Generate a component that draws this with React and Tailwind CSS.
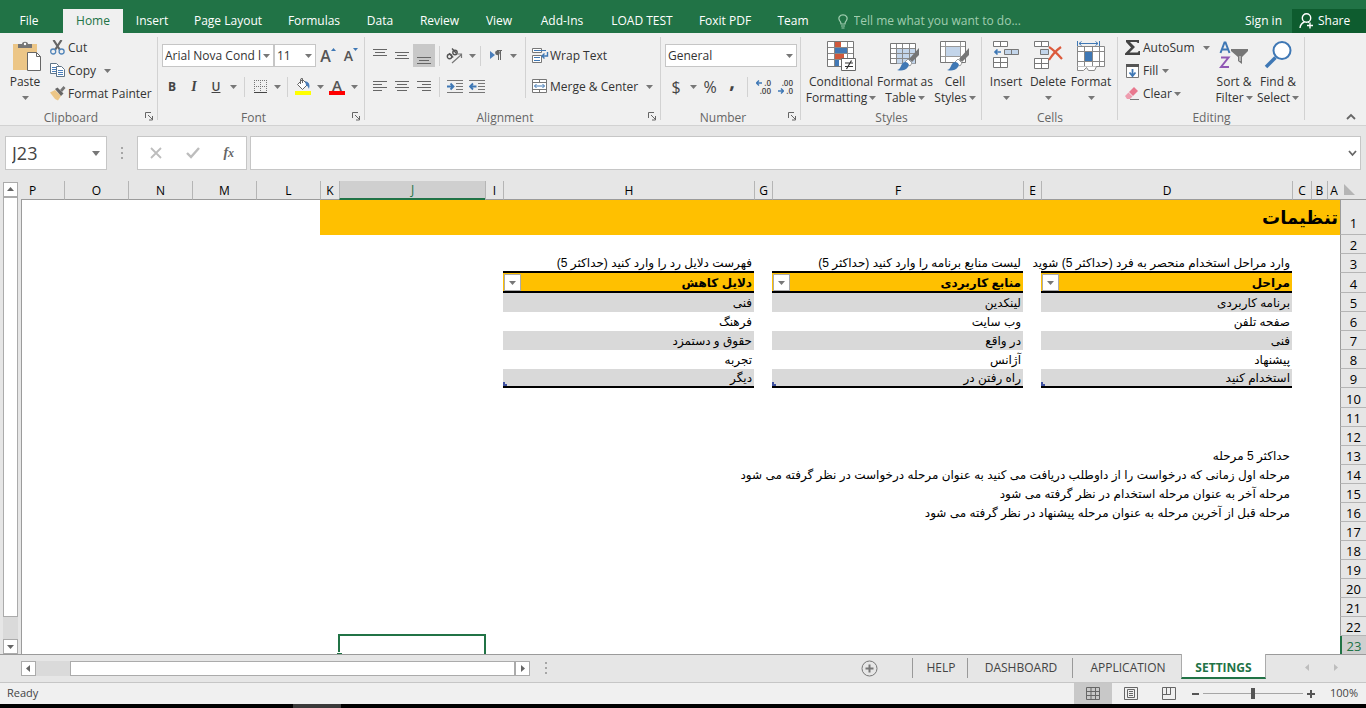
import { useState } from "react";

const Caret = ({ className = "" }) => (
    <svg width="7" height="4" viewBox="0 0 7 4" className={`shrink-0 ${className}`} fill="#777">
        <path d="M0 0h7L3.500 4z" />
    </svg>
);

const Divider = ({ className = "" }) => <span className={`w-px h-5 shrink-0 bg-[#d2d2d2] ${className}`} />;

const Launcher = () => (
    <button aria-label="More options" className="absolute right-1 bottom-1">
        <svg width="9" height="9" fill="none" stroke="#666">
            <path d="M.5 6V.5H6M3 3l4.500 4.500M7.500 4v4H4" />
        </svg>
    </button>
);

const Group = ({ name, width, launcher, children }) => (
    <section aria-label={name} className={`relative shrink-0 flex flex-col ${width}`}>
        <div className="h-[77px]">{children}</div>
        <h2 className="text-center text-xs leading-[15px] text-[#666]">{name}</h2>
        {launcher && <Launcher />}
        <span className="absolute right-0 top-1 h-[83px] w-px bg-[#d2d2d2]" />
    </section>
);

const IconButton = ({ label, width = "w-[22px]", active, children }) => (
    <button
        aria-label={label}
        className={`h-[23px] flex items-center justify-center shrink-0 ${width} ${active ? "bg-[#c8c8c8]" : "hover:bg-[#dadada]"}`}
    >
        {children}
    </button>
);

const BigButton = ({ icon, lines, width, caretBelow }) => (
    <button className={`flex flex-col items-center text-xs leading-4 whitespace-nowrap ${width}`}>
        <span className="h-[33px] flex items-start">{icon}</span>
        <span>{lines[0]}</span>
        <span className="flex items-center gap-0.5 h-4">
            {!caretBelow && lines[1]}
            <Caret />
        </span>
    </button>
);

const SmallButton = ({ icon, text, caret }) => (
    <button className="h-[23px] flex items-center text-xs whitespace-nowrap">
        <span className="w-[18px] flex items-center">{icon}</span>
        {text}
        {caret && <Caret className={caret} />}
    </button>
);

const SelectBox = ({ label, value, width }) => (
    <span className={`relative flex items-center shrink-0 bg-white border border-[#c6c6c6] h-[23px] ${width}`}>
        <select aria-label={label} defaultValue={value} className="appearance-none w-full h-full pl-0.5 pr-2 text-xs bg-transparent outline-none">
            <option>{value}</option>
        </select>
        <Caret className="absolute right-[3px] pointer-events-none" />
    </span>
);

const Lines = ({ rows, height = 16 }) => (
    <svg width="14" height={height} stroke="#666">
        {rows.map(([x1, x2, y]) => (
            <path key={y} d={`M${x1} ${y}.5H${x2}`} />
        ))}
    </svg>
);

const PasteIcon = () => (
    <svg width="34" height="31" viewBox="-4 0 34 31">
        <path d="M1 3h24v26H1z" fill="#ecc687" />
        <path d="M6 7V3h4c0-3 6-3 6 0h4v4z" fill="#757575" />
        <circle cx="13" cy="3" r="1.200" fill="#fff" />
        <path d="M15.500 11.500h9l4 4v14h-13z" fill="#fff" stroke="#666" />
        <path d="M24.500 11.500v4h4" fill="none" stroke="#666" />
    </svg>
);

const CutIcon = () => (
    <svg width="15" height="15" fill="none">
        <path d="M3.500 0l6.500 10M11.500 0L5 10" stroke="#666" strokeWidth="2.200" />
        <circle cx="3.200" cy="11.500" r="2.500" stroke="#5184b8" strokeWidth="1.300" />
        <circle cx="11.600" cy="11.500" r="2.500" stroke="#5184b8" strokeWidth="1.300" />
    </svg>
);

const CopyIcon = () => (
    <svg width="16" height="15" stroke="#5e7488" fill="#fff">
        <path d="M.5 .5h6l2 2v8h-8z" />
        <path d="M2 4.500h4M2 6.500h4M2 8.500h4" stroke="#4a7ebb" />
        <path d="M6.500 3.500h5l3 3v7h-8z" />
        <path d="M8 7.500h5M8 9.500h5M8 11.500h5" stroke="#4a7ebb" />
    </svg>
);

const PainterIcon = () => (
    <svg width="16" height="15">
        <path d="M0 6.500l5-2.500 6 6-3 4.500-3-1.500z" fill="#ecc687" />
        <path d="M5 3l2.500-1.500 6 6L11 10z" fill="#666" />
        <path d="M10 4l3.500-4 2 2L12 6z" fill="#757575" />
    </svg>
);

const FillIcon = () => (
    <svg width="18" height="17">
        <path d="M3.500 6.500l5-5 5 5-5 5z" fill="#fff" stroke="#666" />
        <path d="M6.500 6V2q0-2 2-1.500V5" fill="none" stroke="#666" />
        <path d="M11 3q6 1 4 8-1-3-3-4z" fill="#4a7ebb" />
        <path d="M1 13h16v4H1z" fill="#ff0" />
    </svg>
);

const BordersIcon = () => (
    <svg width="15" height="15" stroke="#777" strokeDasharray="1 1" fill="none">
        <path d="M1 1.500h13M1 7.500h13M1.500 1v12M7.500 1v12M13.500 1v12" />
        <path d="M1 13.500h13" strokeDasharray="none" stroke="#444" />
    </svg>
);

const OrientationIcon = () => (
    <svg width="18" height="16" fill="none" stroke="#555" strokeWidth="1.400">
        <circle cx="3.500" cy="8.500" r="2.200" />
        <path d="M3.200 5.200l4 4.200M6 .5l4.500 5" />
        <circle cx="9" cy="4.500" r="2.200" />
        <path d="M6 15L15.500 6.500M11.500 6h4v4" stroke="#777" strokeWidth="1.200" />
    </svg>
);

const DirectionIcon = () => (
    <svg width="13" height="11">
        <path d="M0 1l5 4-5 4z" fill="#4a7ebb" />
        <path d="M8.500 0v10M10.500 0v10M7 .5h5" stroke="#666" />
        <circle cx="7.500" cy="2.800" r="2.400" fill="#666" />
    </svg>
);

const IndentIcon = ({ flip }) => (
    <svg width="17" height="14" fill="none">
        <path d="M0 .5h16M9 3.500h7M9 6.500h7M9 9.500h7M0 12.500h16" stroke="#777" />
        <path d={flip ? "M7.500 6.500H1M4 3.500L1 6.500l3 3" : "M0 6.500h6.500M3.500 3.500l3 3-3 3"} stroke="#3f78b5" strokeWidth="1.800" />
    </svg>
);

const WrapIcon = () => (
    <svg width="17" height="16" fill="#fff" stroke="#777">
        <path d="M.5 .5h9v4h-9zM.5 7.500h9v7h-9z" />
        <path d="M2 2.500h12M2 9.500h6M2 12.500h6" stroke="#3f78b5" />
        <path d="M15.500 4v4h-5M12.500 5.500l-2.500 2.500 2.500 2.500" stroke="#3f78b5" fill="none" strokeWidth="1.400" />
    </svg>
);

const MergeIcon = () => (
    <svg width="16" height="15" fill="#fff" stroke="#777">
        <path d="M.5 .5h14v13H.5zM.5 3.500h14M.5 10.500h14M7.500 .5v3M7.500 10.500v3" />
        <path d="M2.500 7h10M4.500 5L2.500 7l2 2M10.500 5l2 2-2 2" fill="none" stroke="#3f78b5" />
    </svg>
);

const DecimalArrow = ({ right }) => (
    <svg width="6" height="6" fill="none" stroke="#3f78b5" strokeWidth="1.400">
        <path d={right ? "M0 3h5.500M3 .5L5.500 3 3 5.500" : "M6 3H.7M3 .5L.5 3 3 5.500"} />
    </svg>
);

const DecimalIcon = ({ less }) => (
    <span className="w-4 flex flex-col items-end text-[8px] leading-[8px] font-semibold">
        <span className="flex items-center gap-0.5">
            {!less && <DecimalArrow />}
            {less ? ".00" : ".0"}
        </span>
        <span className="flex items-center gap-0.5">
            {less && <DecimalArrow right />}
            {less ? ".0" : ".00"}
        </span>
    </span>
);

const ConditionalIcon = () => (
    <svg width="31" height="31">
        <path d="M1.500 .5h26v25h-26z" fill="#fff" stroke="#777" />
        <path d="M2 6.500h25M2 12.500h25M2 18.500h25M8.500 1v24M21.500 1v24" stroke="#888" />
        <path d="M9 1h6v5H9zM9 13h9v5H9z" fill="#d0593c" />
        <path d="M9 7h12v5H9zM9 19h4v6H9z" fill="#4278b5" />
        <path d="M15.500 17.500h14v12h-14z" fill="#fff" stroke="#666" />
        <path d="M19 22h8M19 25.500h8M25.500 19.500l-5 8.500" stroke="#333" strokeWidth="1.200" />
    </svg>
);

const Brush = () => (
    <>
        <path d="M29 7v7l-7 7-3-3z" fill="#757575" />
        <path d="M18 18l4 4-2 3-5-4z" fill="#fff" stroke="#888" strokeWidth=".8" />
        <path d="M7 29c5-1 3-7 8-8 3 0 5 3 3 5-3 4-7 4-11 3z" fill="#3f78b5" />
    </>
);

const FormatTableIcon = () => (
    <svg width="31" height="31">
        <path d="M.5 2.500h25v20H.5z" fill="#fff" stroke="#777" />
        <path d="M7 7.500h18v15H7z" fill="#c3d5ea" />
        <path d="M1 7.500h24M1 12.500h24M1 17.500h24M6.500 3v19M12.500 3v19M19.500 3v19" stroke="#888" />
        <Brush />
    </svg>
);

const CellStylesIcon = () => (
    <svg width="31" height="31">
        <path d="M.5 .5h25v21H.5z" fill="#fff" stroke="#777" />
        <path d="M1 5.500h24M1 15.500h24M5.500 1v20M20.500 1v20" stroke="#999" />
        <path d="M6 6h14v9H6z" fill="#c3d5ea" />
        <Brush />
    </svg>
);

const InsertIcon = () => (
    <svg width="28" height="29" fill="#fff" stroke="#777">
        <path d="M1.500 .5h14v5h-14zM8.500 .5v5M1.500 16.500h14v10h-14zM1.500 21.500h14M8.500 16.500v10" />
        <path d="M12.500 8.500h14v5h-14zM19.500 8.500v5" fill="#c3d5ea" />
        <path d="M9 11H2.500M5.500 8.500L3 11l2.500 2.500" fill="none" stroke="#3f78b5" strokeWidth="1.700" />
    </svg>
);

const DeleteIcon = () => (
    <svg width="30" height="29" fill="#fff" stroke="#777">
        <path d="M1.500 .5h14v5h-14zM8.500 .5v5M1.500 17.500h14v10h-14zM1.500 22.500h14M8.500 17.500v10" />
        <path d="M7.500 8.500h8v5h-8z" fill="#c3d5ea" />
        <path d="M16 6q5 3 13 12M28 6q-7 5-12 13" fill="none" stroke="#dc5a3c" strokeWidth="2.200" />
    </svg>
);

const FormatIcon = () => (
    <svg width="30" height="31" fill="#fff" stroke="#888">
        <path d="M1.500 5.500h27v20h-27zM1.500 10.500h27M1.500 20.500h27M8.500 5.500v20M16.500 5.500v20M23.500 5.500v20" />
        <path d="M1.500 25.500v4h6l3-3 2 3h6l2-4" />
        <path d="M9 11h7v9H9z" fill="#3f78b5" stroke="none" />
        <path d="M1.500 0v5M23.500 0v5M3 2.500h19M5.500 .5l-2.500 2 2.500 2M19.500 .5l2.500 2-2.500 2" fill="none" stroke="#3f78b5" />
    </svg>
);

const SumIcon = () => (
    <svg width="16" height="15">
        <path d="M1 0h13v3h-1.500q0-1-1.500-1H5l5 5-5.500 5.500H12q1.500 0 1.500-1.500H15v4H0v-1.500L6 7.500 1 2z" fill="#444" />
    </svg>
);

const FillDownIcon = () => (
    <svg width="15" height="16">
        <path d="M1.500 1.500h12v13h-12z" fill="#fff" stroke="#777" />
        <path d="M1 1h13v3H1z" fill="#555" />
        <path d="M7.500 6v7M4.500 9.500l3 3.500 3-3.500" fill="none" stroke="#3f78b5" strokeWidth="1.800" />
    </svg>
);

const EraserIcon = () => (
    <svg width="15" height="14">
        <path d="M9 0l4 4-5 5-4-4z" fill="#e8788e" />
        <path d="M3.500 5.500l4 4L5 12H2L0 9z" fill="#ee9daf" />
        <path d="M5 12.500h9" stroke="#777" />
    </svg>
);

const SortIcon = () => (
    <svg width="30" height="31" fill="none">
        <path d="M1.500 12L5.500 1.500h1L10.500 12M3 8.500h6" stroke="#3f78b5" strokeWidth="2" />
        <path d="M2 16.500h7.500L2 26h8" stroke="#9058b4" strokeWidth="2" />
        <path d="M12 8h17v2l-6 6v7l-4-3v-4l-7-6z" fill="#777" />
        <path d="M21 15v5" stroke="#f0f0f0" />
    </svg>
);

const FindIcon = () => (
    <svg width="29" height="28" fill="none" stroke="#3f78b5">
        <circle cx="18" cy="9.500" r="8.500" fill="#fff" strokeWidth="2" />
        <path d="M11.500 16.500L2 26" strokeWidth="3.500" />
    </svg>
);

const tabs = [
    ["File", "w-[58px]"],
    ["Home", "w-[60px] ml-[5px]"],
    ["Insert", "w-[58px]"],
    ["Page Layout", "w-[94px]"],
    ["Formulas", "w-[78px]"],
    ["Data", "w-[54px]"],
    ["Review", "w-[65px]"],
    ["View", "w-[54px]"],
    ["Add-Ins", "w-[72px]"],
    ["LOAD TEST", "w-[88px]"],
    ["Foxit PDF", "w-[78px]"],
    ["Team", "w-[58px]"],
];

const TabBar = () => (
    <nav className="h-[33px] shrink-0 bg-[#217346] text-white text-xs flex items-end">
        {tabs.map(([name, width]) => (
            <button
                key={name}
                className={`h-6 shrink-0 whitespace-nowrap ${width} ${name === "Home" ? "bg-[#f0f0f0] text-[#217346]" : ""}`}
            >
                {name}
            </button>
        ))}
        <label className="ml-4 h-6 flex items-center gap-1.5 flex-1">
            <svg width="10" height="15" fill="none" stroke="#a0cdb0" strokeWidth="1.200">
                <path d="M3 10Q3 8 1.800 6.800C-.5 3.500 2 .8 5 .8S10.500 3.500 8.200 6.800Q7 8 7 10zM3 12h4M3.500 14h3" />
            </svg>
            <input
                placeholder="Tell me what you want to do..."
                className="w-full bg-transparent outline-none placeholder:text-[#a0cdb0] placeholder:opacity-100"
            />
        </label>
        <button className="h-6 px-2.5 whitespace-nowrap">Sign in</button>
        <button className="h-6 w-[74px] bg-[#0e5c2f] flex items-center gap-1 pl-[7px]">
            <svg width="15" height="16" fill="none" stroke="#fff" strokeWidth="1.400">
                <circle cx="7.500" cy="5" r="4.200" />
                <path d="M5.500 9Q1.500 10.500 1 15M9 9l1 .6M11 9.500v6M8 12.500h6" />
            </svg>
            Share
        </button>
    </nav>
);

const Ribbon = () => (
    <div className="h-[93px] shrink-0 bg-[#f0f0f0] border-b border-[#d2d2d2] flex relative">
        <Group name="Clipboard" width="w-[158px] pr-4" launcher>
            <div className="flex">
                <div className="pt-2 pl-1">
                    <BigButton icon={<PasteIcon />} lines={["Paste"]} width="w-[42px]" caretBelow />
                </div>
                <div className="pt-[3px] pl-1 flex flex-col items-start">
                    <SmallButton icon={<CutIcon />} text="Cut" />
                    <SmallButton icon={<CopyIcon />} text="Copy" caret="ml-2" />
                    <SmallButton icon={<PainterIcon />} text="Format Painter" />
                </div>
            </div>
        </Group>
        <Group name="Font" width="w-[207px] pr-4" launcher>
            <div className="pt-[11px] pl-1 flex items-center">
                <SelectBox label="Font" value="Arial Nova Cond l" width="w-[112px]" />
                <SelectBox label="Font size" value="11" width="w-[42px]" />
                <IconButton label="Increase font size" width="w-6">
                    <span className="text-base font-semibold text-[#555]">A</span>
                    <svg width="5" height="4" className="mb-3" fill="#3f78b5"><path d="M0 3h5L2.500 0z" /></svg>
                </IconButton>
                <IconButton label="Decrease font size">
                    <span className="text-sm font-semibold text-[#555]">A</span>
                    <svg width="5" height="4" className="mb-3" fill="#3f78b5"><path d="M0 0h5L2.500 3z" /></svg>
                </IconButton>
            </div>
            <div className="pt-2 pl-1 flex items-center text-[#444]">
                <IconButton label="Bold" width="w-5"><b className="text-xs">B</b></IconButton>
                <IconButton label="Italic" width="w-6"><i className="text-sm font-bold font-['Liberation_Serif',serif]">I</i></IconButton>
                <IconButton label="Underline" width="w-5"><u className="text-xs font-semibold">U</u></IconButton>
                <IconButton label="Underline styles" width="w-3.5"><Caret /></IconButton>
                <Divider className="mx-1" />
                <IconButton label="Borders"><BordersIcon /></IconButton>
                <IconButton label="Border styles" width="w-3"><Caret /></IconButton>
                <Divider className="mx-1" />
                <IconButton label="Fill color"><FillIcon /></IconButton>
                <IconButton label="Fill colors" width="w-3"><Caret /></IconButton>
                <IconButton label="Font color">
                    <span className="flex flex-col items-center w-4 border-b-4 border-[#f00] text-[15px] leading-3 font-semibold text-[#555]">A</span>
                </IconButton>
                <IconButton label="Font colors" width="w-3"><Caret /></IconButton>
            </div>
        </Group>
        <Group name="Alignment" width="w-[296px] pr-4" launcher>
            <div className="flex">
                <div className="w-40 shrink-0">
                    <div className="pt-[11px] pl-1 flex items-center">
                        <IconButton label="Top align"><Lines rows={[[0, 14, 1], [2, 12, 4], [0, 14, 7]]} /></IconButton>
                        <IconButton label="Middle align"><Lines rows={[[0, 14, 4], [2, 12, 7], [0, 14, 10]]} /></IconButton>
                        <IconButton label="Bottom align" active><Lines rows={[[0, 14, 9], [2, 12, 12], [0, 14, 15]]} /></IconButton>
                        <Divider className="mx-1" />
                        <IconButton label="Orientation"><OrientationIcon /></IconButton>
                        <IconButton label="Orientation options" width="w-3"><Caret /></IconButton>
                        <Divider className="ml-0.5 mr-1" />
                        <IconButton label="Text direction"><DirectionIcon /></IconButton>
                        <IconButton label="Text direction options" width="w-3"><Caret /></IconButton>
                    </div>
                    <div className="pt-2 pl-1 flex items-center">
                        <IconButton label="Align left"><Lines rows={[[0, 14, 2], [0, 9, 5], [0, 14, 8], [0, 9, 11]]} /></IconButton>
                        <IconButton label="Center"><Lines rows={[[0, 14, 2], [2, 12, 5], [0, 14, 8], [2, 12, 11]]} /></IconButton>
                        <IconButton label="Align right"><Lines rows={[[0, 14, 2], [5, 14, 5], [0, 14, 8], [5, 14, 11]]} /></IconButton>
                        <Divider className="mx-1" />
                        <IconButton label="Decrease indent"><IndentIcon /></IconButton>
                        <IconButton label="Increase indent"><IndentIcon flip /></IconButton>
                    </div>
                </div>
                <div className="pl-1.5 pt-[7px] mt-1 border-l border-[#d2d2d2] flex flex-col items-start gap-2">
                    <SmallButton icon={<WrapIcon />} text="Wrap Text" />
                    <SmallButton icon={<MergeIcon />} text="Merge & Center" caret="ml-2" />
                </div>
            </div>
        </Group>
        <Group name="Number" width="w-[140px] pr-4" launcher>
            <div className="pt-[11px] pl-1 flex items-center">
                <SelectBox label="Number format" value="General" width="w-[132px]" />
            </div>
            <div className="pt-2 pl-1 flex items-center text-[#444] text-base">
                <IconButton label="Currency">$</IconButton>
                <IconButton label="Currency options" width="w-3"><Caret /></IconButton>
                <IconButton label="Percent">%</IconButton>
                <IconButton label="Comma style"><b className="pb-3 text-xl">,</b></IconButton>
                <Divider className="mx-1" />
                <IconButton label="Increase decimal"><DecimalIcon /></IconButton>
                <IconButton label="Decrease decimal"><DecimalIcon less /></IconButton>
            </div>
        </Group>
        <Group name="Styles" width="w-[181px]">
            <div className="pt-2 pl-1.5 flex">
                <BigButton icon={<ConditionalIcon />} lines={["Conditional", "Formatting"]} width="w-[68px]" />
                <BigButton icon={<FormatTableIcon />} lines={["Format as", "Table"]} width="w-[60px]" />
                <BigButton icon={<CellStylesIcon />} lines={["Cell", "Styles"]} width="w-10" />
            </div>
        </Group>
        <Group name="Cells" width="w-[136px]">
            <div className="pt-2 pl-1 flex">
                <BigButton icon={<InsertIcon />} lines={["Insert"]} width="w-10" caretBelow />
                <BigButton icon={<DeleteIcon />} lines={["Delete"]} width="w-11" caretBelow />
                <BigButton icon={<FormatIcon />} lines={["Format"]} width="w-[42px]" caretBelow />
            </div>
        </Group>
        <Group name="Editing" width="w-[187px]">
            <div className="flex">
                <div className="pt-[3px] pl-[7px] w-[94px] flex flex-col items-start">
                    <SmallButton icon={<SumIcon />} text="AutoSum" caret="ml-2" />
                    <SmallButton icon={<FillDownIcon />} text="Fill" caret="ml-1" />
                    <SmallButton icon={<EraserIcon />} text="Clear" caret="ml-0.5" />
                </div>
                <div className="pt-2 flex">
                    <BigButton icon={<SortIcon />} lines={["Sort &", "Filter"]} width="w-11" />
                    <BigButton icon={<FindIcon />} lines={["Find &", "Select"]} width="w-11" />
                </div>
            </div>
        </Group>
        <button aria-label="Collapse the ribbon" className="absolute right-2.5 bottom-1">
            <svg width="10" height="8" fill="none" stroke="#666" strokeWidth="1.800"><path d="M1 6l4-4 4 4" /></svg>
        </button>
    </div>
);

const Dots = ({ className = "" }) => (
    <svg width="3" height="12" fill="#a6a6a6" className={className}>
        <path d="M0 0h2v2H0zM0 5h2v2H0zM0 10h2v2H0z" />
    </svg>
);

const FormulaBar = () => (
    <div className="shrink-0 pt-2.5 px-[5px] h-[55px] flex items-start">
        <label className="relative w-[102px] h-[34px] shrink-0 bg-white border border-[#c6c6c6] flex items-center">
            <input aria-label="Name box" defaultValue="J23" className="w-full pl-1.5 text-lg text-[#444] outline-none" />
            <svg width="8" height="5" fill="#777" className="absolute right-1.5"><path d="M0 0h8L4 5z" /></svg>
        </label>
        <Dots className="ml-3.5 mr-[13px] mt-[11px]" />
        <div className="w-[110px] h-[34px] shrink-0 bg-white border border-[#c6c6c6] flex items-center justify-around">
            <button aria-label="Cancel">
                <svg width="12" height="12" stroke="#bdbdbd" strokeWidth="1.800"><path d="M1 1l10 10M11 1L1 11" /></svg>
            </button>
            <button aria-label="Enter">
                <svg width="14" height="12" fill="none" stroke="#bdbdbd" strokeWidth="2.400"><path d="M1 6l4 4 8-9" /></svg>
            </button>
            <button aria-label="Insert function" className="font-['Liberation_Serif',serif] italic font-bold text-sm text-[#666] leading-none">
                f<span className="text-xs">x</span>
            </button>
        </div>
        <label className="ml-[3px] flex-1 h-[34px] bg-white border border-[#c6c6c6] flex items-center pr-[3px]">
            <input aria-label="Formula" className="flex-1 h-full px-2 outline-none" />
            <svg width="9" height="7" fill="none" stroke="#666" strokeWidth="1.800"><path d="M1 1l3.500 4L8 1" /></svg>
        </label>
    </div>
);

const columns = [
    ["A", "w-[13px]"],
    ["B", "w-4"],
    ["C", "w-[19px]"],
    ["D", "w-[251px]"],
    ["E", "w-[18px]"],
    ["F", "w-[251px]"],
    ["G", "w-[18px]"],
    ["H", "w-[251px]"],
    ["I", "w-[18px]"],
    ["J", "w-[146px]"],
    ["K", "w-[19px]"],
    ["L", "w-16"],
    ["M", "w-16"],
    ["N", "w-16"],
    ["O", "w-16"],
    ["P", ""],
];

const cells = {
    A1: "تنظیمات",
    D3: "وارد مراحل استخدام منحصر به فرد (حداكثر 5) شويد",
    F3: "ليست منابع برنامه را وارد كنيد (حداكثر 5)",
    H3: "فهرست دلايل رد را وارد كنيد (حداكثر 5)",
    D4: "مراحل",
    F4: "منابع كاربردى",
    H4: "دلايل كاهش",
    D5: "برنامه كاربردى",
    F5: "لينكدين",
    H5: "فنى",
    D6: "صفحه تلفن",
    F6: "وب سايت",
    H6: "فرهنگ",
    D7: "فنى",
    F7: "در واقع",
    H7: "حقوق و دستمزد",
    D8: "پيشنهاد",
    F8: "آژانس",
    H8: "تجربه",
    D9: "استخدام كنيد",
    F9: "راه رفتن در",
    H9: "ديگر",
    D13: "حداكثر 5 مرحله",
    D14: "مرحله اول زمانى كه درخواست را از داوطلب دريافت مى كنيد به عنوان مرحله درخواست در نظر گرفته مى شود",
    D15: "مرحله آخر به عنوان مرحله استخدام در نظر گرفته مى شود",
    D16: "مرحله قبل از آخرين مرحله به عنوان مرحله پيشنهاد در نظر گرفته مى شود",
};

const rowHeight = (row) => {
    if (row === 1) return "h-[35px]";
    return row === 4 || row === 10 ? "h-5" : "h-[19px]";
};

const cellStyle = (col, row) => {
    if (row === 1) return col <= "K" ? "bg-[#ffc000] text-lg leading-7 font-bold" : "";
    if (!["D", "F", "H"].includes(col)) return "";
    if (row === 3) return "border-b-2 border-black";
    if (row === 4) return "relative bg-[#ffc000] border-b-2 border-black font-bold";
    if (row === 9) return "relative bg-[#d9d9d9] border-b-2 border-black";
    return row === 5 || row === 7 ? "bg-[#d9d9d9]" : "";
};

const Cell = ({ col, row, selected, onSelect }) => {
    const inTable = ["D", "F", "H"].includes(col);
    return (
        <td
            onClick={onSelect}
            className={`p-0 ps-0.5 pt-px whitespace-nowrap ${cellStyle(col, row)} ${selected ? "relative" : ""} ${
                col === "P" ? "border-l border-[#9b9b9b]" : ""
            }`}
        >
            {cells[col + row]}
            {inTable && row === 4 && (
                <button aria-label={`Filter column ${col}`} className="absolute left-px top-px w-[17px] h-[17px] bg-white border border-[#ababab] flex items-center justify-center">
                    <Caret />
                </button>
            )}
            {inTable && row === 9 && (
                <svg width="4" height="4" fill="#3f51a0" className="absolute left-0 bottom-0"><path d="M0 0h2v2h2v2H0z" /></svg>
            )}
            {selected && (
                <span className="absolute -inset-x-px -top-0.5 -bottom-0.5 border-2 border-[#217346]">
                    <span className="absolute -left-[3px] -bottom-px w-[5px] h-[3px] bg-[#217346] border-t border-r border-white box-content" />
                </span>
            )}
        </td>
    );
};

const ScrollButton = ({ label, d, className = "" }) => (
    <button aria-label={label} className={`w-[15px] h-[15px] shrink-0 bg-white border border-[#ababab] flex items-center justify-center ${className}`}>
        <svg width="7" height="7" fill="#666"><path d={d} /></svg>
    </button>
);

const Sheet = () => {
    const [active, setActive] = useState("J23");
    const rows = Array.from({ length: 23 }, (_, i) => i + 1);

    return (
        <div className="flex-1 min-h-0 flex border-b border-[#9b9b9b]">
            <div className="w-[21px] shrink-0 flex flex-col pt-px pl-[3px]">
                <ScrollButton label="Scroll up" d="M0 5h7L3.500 1z" />
                <div className="flex-1 w-[15px] bg-[#dadada] flex flex-col">
                    <div className="h-[95%] bg-white border border-[#ababab]" />
                </div>
                <ScrollButton label="Scroll down" d="M0 2h7L3.500 6z" />
            </div>
            <div className="flex-1 min-w-0 overflow-hidden">
                <table dir="rtl" className="w-full table-fixed border-separate border-spacing-0 bg-white text-xs leading-4 font-['Liberation_Sans','DejaVu_Sans',sans-serif] text-black">
                    <colgroup>
                        <col className="w-[26px]" />
                        {columns.map(([name, width]) => (
                            <col key={name} className={width} />
                        ))}
                    </colgroup>
                    <thead>
                        <tr className="h-[19px] bg-[#e6e6e6] font-['Open_Sans',sans-serif]">
                            <th className="p-0 border-b border-[#9b9b9b]">
                                <svg width="12" height="12" className="ms-2.5" fill="#b5b5b5"><path d="M0 0v11h11z" /></svg>
                            </th>
                            {columns.map(([name]) => (
                                <th
                                    key={name}
                                    className={`p-0 font-normal leading-[17px] ${name === "P" ? "ps-5 pe-0" : "border-l border-l-[#b5b5b5]"} ${
                                        active.startsWith(name)
                                            ? "bg-[#cfcfcf] text-[#217346] border-b-2 border-b-[#217346] leading-4"
                                            : "border-b border-b-[#9b9b9b]"
                                    }`}
                                >
                                    {name}
                                </th>
                            ))}
                        </tr>
                    </thead>
                    <tbody>
                        {rows.map((row) => (
                            <tr key={row} className={rowHeight(row)}>
                                <th
                                    className={`p-0 font-normal text-[13px] font-['Open_Sans',sans-serif] border-b border-b-[#b5b5b5] align-bottom ${
                                        row === 1 ? "pb-[3px]" : ""
                                    } ${
                                        active.slice(1) === String(row)
                                            ? "bg-[#cfcfcf] text-[#217346] border-l-2 border-l-[#217346]"
                                            : "bg-[#e6e6e6] border-l border-l-[#9b9b9b]"
                                    }`}
                                >
                                    {row}
                                </th>
                                {columns.map(([col]) => (
                                    <Cell
                                        key={col}
                                        col={col}
                                        row={row}
                                        selected={active === col + row}
                                        onSelect={() => setActive(col + row)}
                                    />
                                ))}
                            </tr>
                        ))}
                    </tbody>
                </table>
            </div>
        </div>
    );
};

const sheetTabs = [
    ["HELP", "w-[55px]"],
    ["DASHBOARD", "w-[105px]"],
    ["APPLICATION", "w-[109px]"],
];

const SheetBar = () => (
    <div className="h-[27px] shrink-0 flex items-start pl-[21px] text-xs text-[#444]">
        <div className="flex w-[509px] pt-1.5">
            <ScrollButton label="Scroll left" d="M5 0v7L1 3.500z" />
            <div className="flex-1 bg-[#dadada] flex justify-end">
                <div className="w-[93%] bg-white border border-[#ababab]" />
            </div>
            <ScrollButton label="Scroll right" d="M2 0v7l4-3.500z" />
        </div>
        <Dots className="ml-[15px] mt-[7px]" />
        <div className="ml-auto flex items-start">
            <button aria-label="New sheet" className="mt-[5px] mr-[34px]">
                <svg width="17" height="17" fill="none" stroke="#777">
                    <circle cx="8.500" cy="8.500" r="7.500" />
                    <path d="M8.500 4.500v8M4.500 8.500h8" strokeWidth="2" />
                </svg>
            </button>
            {sheetTabs.map(([name, width]) => (
                <button key={name} className={`mt-[3px] h-5 border-l border-[#999] text-center pl-0.5 ${width}`}>{name}</button>
            ))}
            <button className="-mt-px h-[25px] w-[85px] pt-1 bg-white border-x border-x-[#ababab] border-b-2 border-b-[#217346] text-[#217346] font-bold">
                SETTINGS
            </button>
            <div className="w-[100px] pt-[9px] pl-[38px] flex gap-[22px]">
                <svg width="7" height="8" fill="#bdbdbd"><path d="M5 0v7L1 3.500z" /></svg>
                <svg width="7" height="8" fill="#bdbdbd"><path d="M1 0v7l4-3.500z" /></svg>
            </div>
        </div>
    </div>
);

const StatusBar = () => (
    <footer className="h-[22px] shrink-0 bg-[#f0f0f0] border-t border-[#c6c6c6] flex items-center text-[11px] text-[#444] pl-[7px] pr-2">
        <span className="mr-auto">Ready</span>
        <button aria-label="Normal view" className="w-[38px] h-full bg-[#c8c8c8] flex items-center justify-center">
            <svg width="14" height="13" fill="none" stroke="#666"><path d="M.5 .5h13v12H.5zM.5 4.500h13M.5 8.500h13M5 .5v12M9.500 .5v12" /></svg>
        </button>
        <button aria-label="Page layout view" className="w-[38px] flex items-center justify-center">
            <svg width="14" height="13" fill="none" stroke="#666"><path d="M.5 .5h13v12H.5zM3.500 2.500h7v8h-7zM5 4.500h4M5 6.500h4M5 8.500h4" /></svg>
        </button>
        <button aria-label="Page break preview" className="w-[38px] flex items-center justify-center">
            <svg width="14" height="13" fill="none" stroke="#666"><path d="M.5 .5h13v12H.5zM.5 7.500h8v-7M4.500 .5v7M8.500 7.500v-7" /></svg>
        </button>
        <button aria-label="Zoom out" className="w-[15px] flex justify-center">
            <svg width="7" height="8" stroke="#555" strokeWidth="2"><path d="M0 4h7" /></svg>
        </button>
        <input
            type="range"
            aria-label="Zoom"
            min="10"
            max="190"
            defaultValue="100"
            className="appearance-none w-[100px] h-px bg-[#a6a6a6] [&::-webkit-slider-thumb]:appearance-none [&::-webkit-slider-thumb]:w-1 [&::-webkit-slider-thumb]:h-[11px] [&::-webkit-slider-thumb]:bg-[#555]"
        />
        <button aria-label="Zoom in" className="w-[15px] flex justify-center">
            <svg width="8" height="8" stroke="#555" strokeWidth="2"><path d="M0 4h8M4 0v8" /></svg>
        </button>
        <button className="w-10 text-right">100%</button>
    </footer>
);

const App = () => (
    <div className="h-screen flex flex-col overflow-hidden bg-[#e6e6e6] text-[#333] font-['Open_Sans',sans-serif]">
        <TabBar />
        <Ribbon />
        <FormulaBar />
        <Sheet />
        <SheetBar />
        <StatusBar />
        <div className="h-1 shrink-0 bg-black flex">
            <span className="ml-[293px] w-12 bg-[#3a3a3a]" />
        </div>
    </div>
);

export default App;
